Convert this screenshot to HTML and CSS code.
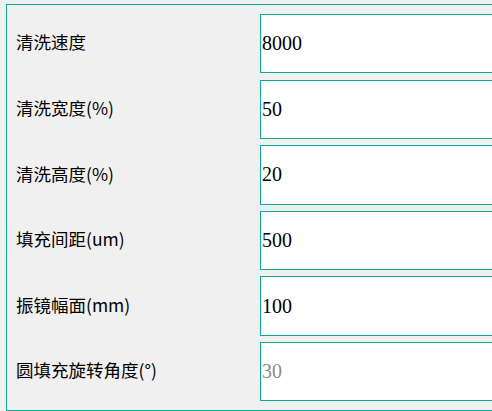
FILE: index.html
```html
<!DOCTYPE html>
<html lang="zh-CN">
<head>
<meta charset="utf-8">
<title>清洗参数</title>
<link rel="stylesheet" href="styles.css">
</head>
<body>
<form class="panel">
  <label class="label" for="f1">清洗速度</label>
  <input class="field" id="f1" type="text" value="8000">
  <label class="label" for="f2">清洗宽度(%)</label>
  <input class="field" id="f2" type="text" value="50">
  <label class="label" for="f3">清洗高度(%)</label>
  <input class="field" id="f3" type="text" value="20">
  <label class="label" for="f4">填充间距(um)</label>
  <input class="field" id="f4" type="text" value="500">
  <label class="label" for="f5">振镜幅面(mm)</label>
  <input class="field" id="f5" type="text" value="100">
  <label class="label" for="f6">圆填充旋转角度(°)</label>
  <input class="field" id="f6" type="text" placeholder="30">
</form>
</body>
</html>
```
FILE: styles.css
```css
html, body {
  margin: 0;
  padding: 0;
  background: #f0f0f0;
}
body {
  padding: 4px 0 0 6px;
  overflow: hidden;
}
.panel {
  box-sizing: border-box;
  width: 560px;
  height: 407px;
  border: 1px solid #0aa99a;
  padding: 9px 0 0 0;
  display: grid;
  grid-template-columns: 253px 1fr;
  grid-auto-rows: 59.4px;
  row-gap: 6.2px;
  align-items: center;
}
.label {
  padding-left: 9px;
  font-family: "Noto Sans CJK SC", "Noto Sans", sans-serif;
  font-size: 17.5px;
  font-weight: 400;
  color: #000;
  line-height: 1;
  margin-top: -3px;
}
.field {
  box-sizing: border-box;
  height: 100%;
  width: 100%;
  margin: 0;
  border: 1px solid #0aa99a;
  background: #fff;
  padding: 0 0 0 1px;
  font-family: "Liberation Serif", serif;
  font-size: 20px;
  color: #000;
  outline: none;
}
.field::placeholder {
  color: #8c8c8c;
  opacity: 1;
}
```
